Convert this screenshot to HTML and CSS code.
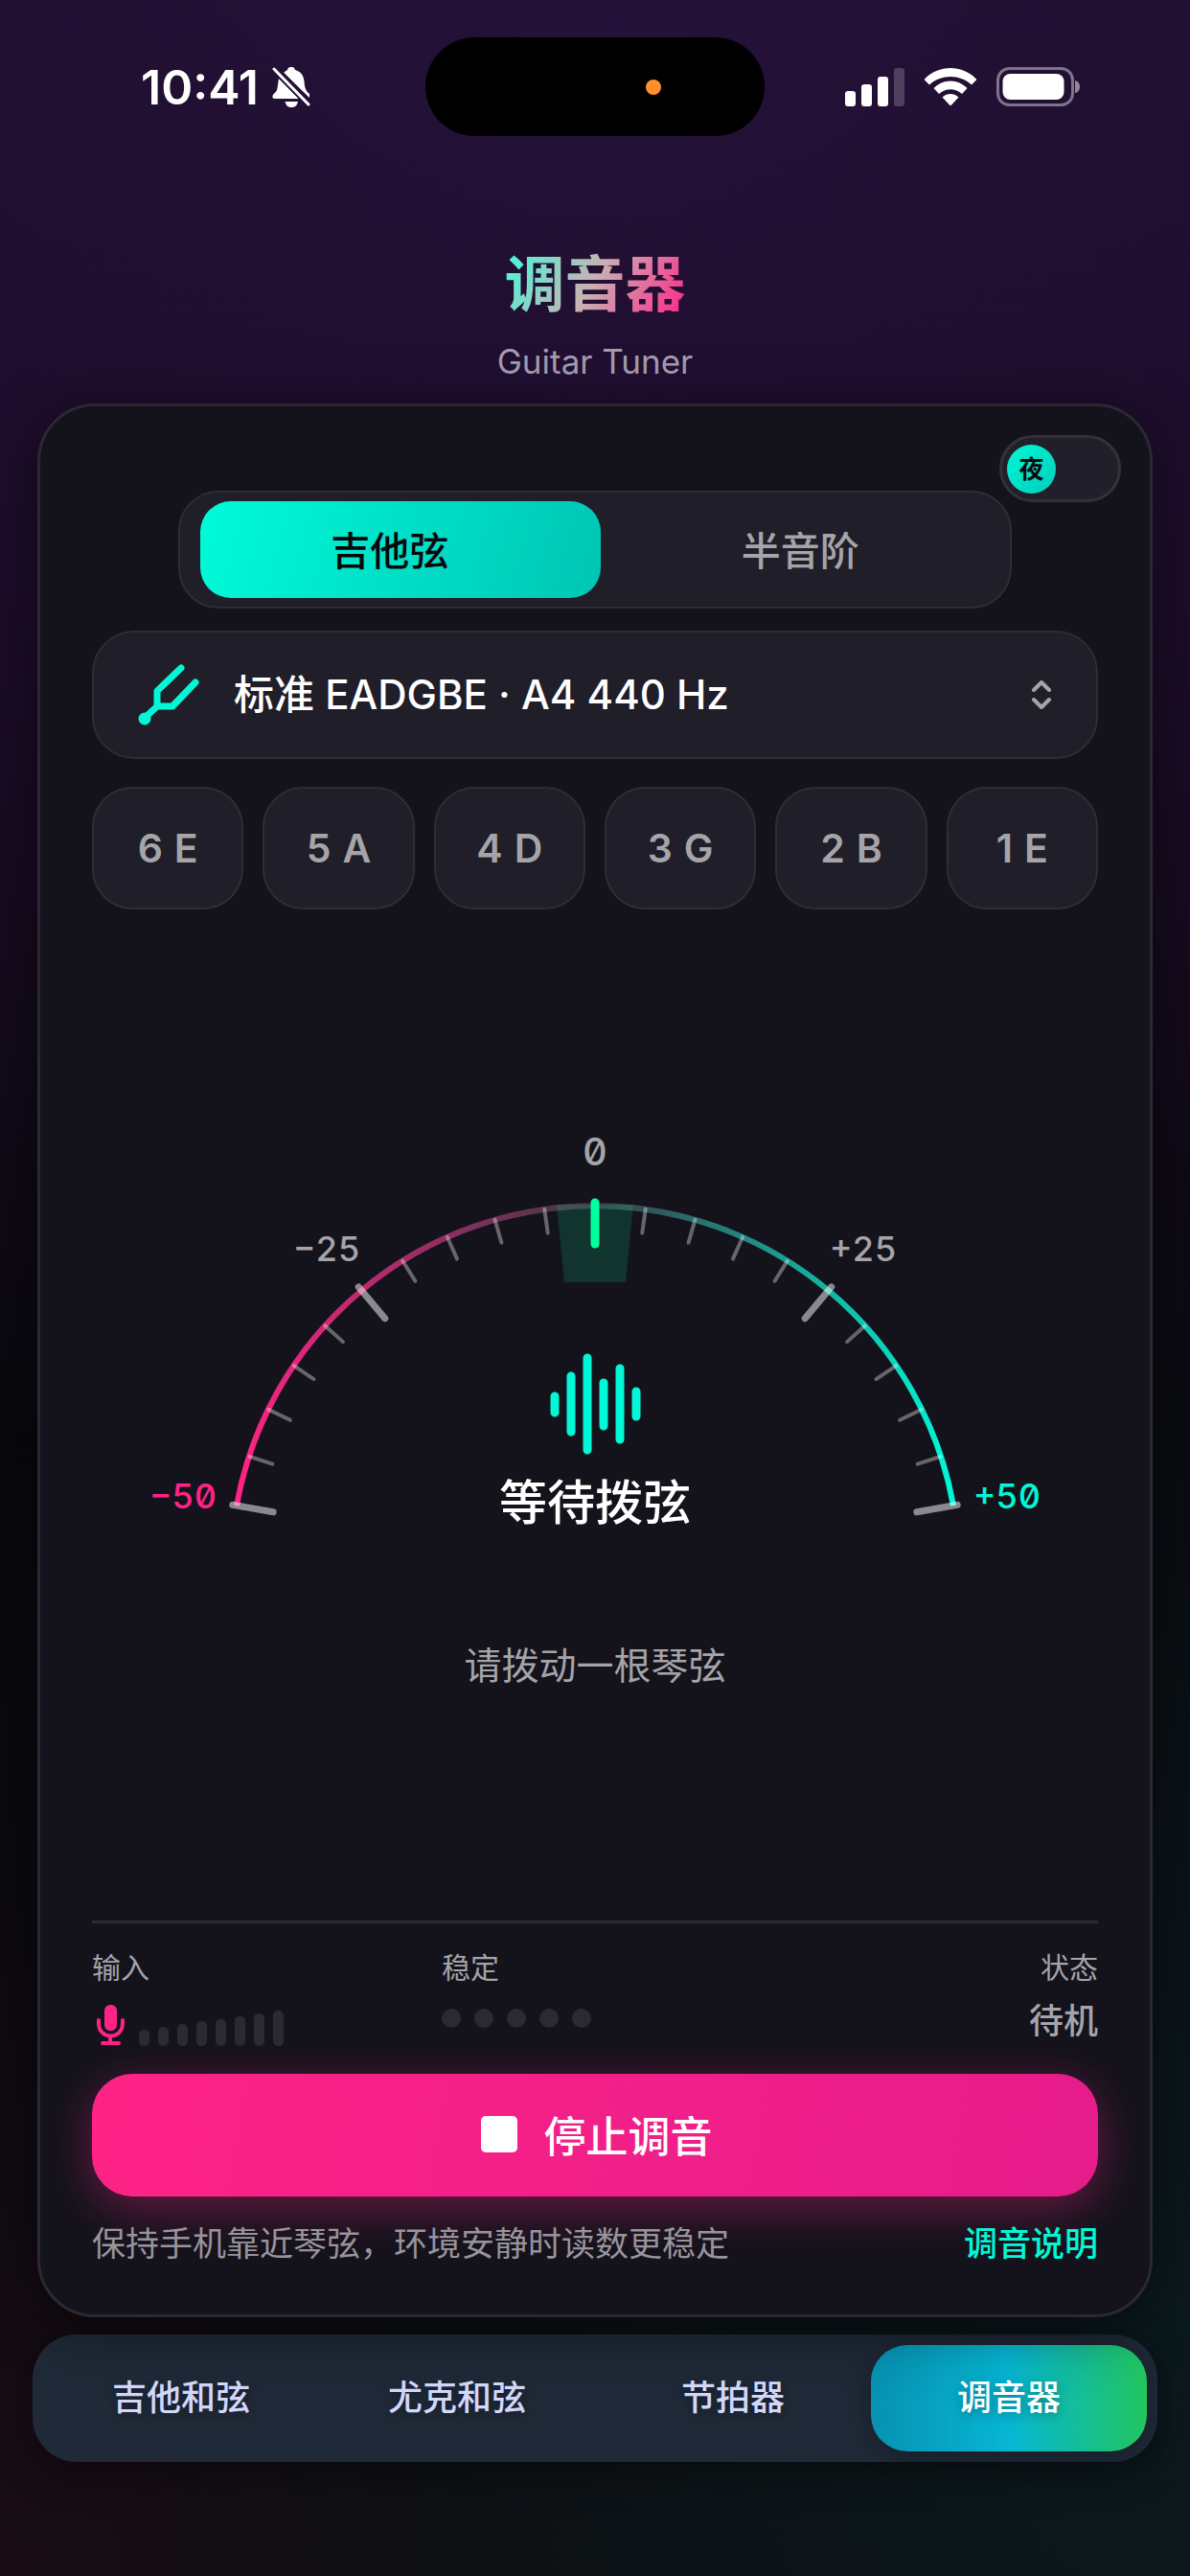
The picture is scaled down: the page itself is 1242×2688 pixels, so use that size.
FILE: index.html
```
<!DOCTYPE html>
<html lang="zh-CN">
<head>
  <meta charset="UTF-8">
  <meta name="viewport" content="width=device-width, initial-scale=1">
  <title>调音器</title>
  <link rel="stylesheet" href="styles.css">
</head>
<body>

<div class="status-bar">
  <div class="status-left">
    <span class="clock">10:41</span>
    <svg class="bell" viewBox="0 0 40 44" width="40" height="44">
      <path fill="#fff" d="M12 7 C14 5 15 4.500 16 4 C16.500 1.500 18 1 20 1 C22 1 23.500 1.500 24 4 C30 5.500 33 10 33.500 16 C34 23 35 25.500 39 29 V33 Z"/>
      <path fill="#fff" d="M7 13 L28 34 H3 C1 34 0 33 0.500 31 C1 29 4 27.500 5 25 C6 22 6 17 7 13 Z"/>
      <path fill="#fff" d="M13.500 37 H27 C26 41.500 23.500 43 20 43 C17 43 14.500 41.500 13.500 37 Z"/>
      <path stroke="#231034" stroke-width="8" d="M4 4 L40 41" fill="none"/>
      <path stroke="#fff" stroke-width="3" stroke-linecap="round" d="M2 3 L38 40" fill="none"/>
    </svg>
  </div>
  <div class="island"><span class="mic-dot"></span></div>
  <div class="status-right">
    <svg viewBox="0 0 62 40" width="62" height="40" fill="#fff">
      <rect x="0" y="24" width="11" height="16" rx="3"/>
      <rect x="17" y="17" width="11" height="23" rx="3"/>
      <rect x="34" y="9" width="11" height="31" rx="3"/>
      <rect x="51" y="0" width="11" height="40" rx="3" opacity="0.2"/>
    </svg>
    <svg viewBox="0 0 54 40" width="54" height="40" fill="#fff">
      <path d="M27 0 C17 0 7 4 0 11.500 Q-0.500 12 0 12.500 L5 17.500 C17 6 37 6 49 17.500 L54 12.500 Q54.500 12 54 11.500 C47 4 37 0 27 0 Z"/>
      <path d="M27 13.500 C20 13.500 14 16.500 9.500 21 L15 27 C21.500 20.500 32.500 20.500 39 27 L44.500 21 C40 16.500 34 13.500 27 13.500 Z"/>
      <path d="M27 27 C24 27 21 28 18.500 30.500 L26 38.500 Q27 39.500 28 38.500 L35.500 30.500 C33 28 30 27 27 27 Z"/>
    </svg>
    <svg viewBox="0 0 88 42" width="88" height="42">
      <rect x="1.500" y="1.500" width="78" height="38" rx="12" fill="none" stroke="#fff" stroke-opacity="0.420" stroke-width="3"/>
      <rect x="6.500" y="7" width="64" height="27" rx="8" fill="#fff"/>
      <path d="M82 14 C85 14.500 87 17 87 20.500 C87 24 85 26.500 82 27 Z" fill="#fff" fill-opacity="0.500"/>
    </svg>
  </div>
</div>

<header class="page-head">
  <h1>调音器</h1>
  <p>Guitar Tuner</p>
</header>

<main class="card">
  <button class="theme-toggle" type="button" aria-label="夜间模式"><span class="knob">夜</span></button>

  <div class="segment">
    <button type="button" class="active">吉他弦</button>
    <button type="button">半音阶</button>
  </div>

  <label class="tuning">
    <svg viewBox="0 0 64 64" width="64" height="64" fill="none" stroke="#00f8d7" stroke-width="7" stroke-linecap="round" stroke-linejoin="round">
      <path d="M45 4 L20 28 V44 H36 L60 19"/>
      <path d="M20 44 L7 56"/>
      <circle cx="7" cy="57" r="6" fill="#00f8d7" stroke="none"/>
      <circle cx="7" cy="57" r="3"/>
    </svg>
    <select aria-label="调弦">
      <option>标准 EADGBE · A4 440 Hz</option>
    </select>
    <svg class="updown" viewBox="0 0 22 30" width="22" height="30" fill="none" stroke="#a5a4a9" stroke-width="4" stroke-linecap="round" stroke-linejoin="round">
      <path d="M3 10 L11 2 L19 10"/>
      <path d="M3 20 L11 28 L19 20"/>
    </svg>
  </label>

  <div class="strings">
    <button type="button"><span>6</span><span>E</span></button>
    <button type="button"><span>5</span><span>A</span></button>
    <button type="button"><span>4</span><span>D</span></button>
    <button type="button"><span>3</span><span>G</span></button>
    <button type="button"><span>2</span><span>B</span></button>
    <button type="button"><span>1</span><span>E</span></button>
  </div>

  <section class="meter">
    <div class="gauge">
      <svg class="dial" viewBox="0 -20 1050 444">
        <defs>
          <linearGradient id="arc" gradientUnits="userSpaceOnUse" x1="151" y1="0" x2="899" y2="0">
            <stop offset="0" stop-color="#ff2386"/>
            <stop offset="0.500" stop-color="#3b3843"/>
            <stop offset="1" stop-color="#00f8d7"/>
          </linearGradient>
        </defs>
        <path d="M151 385 A380 380 0 0 1 899 385" fill="none" stroke="url(#arc)" stroke-width="6"/>
        <path d="M485 71 H565 L557 152 H493 Z" fill="#00ff9d" fill-opacity="0.140"/>
        <g id="ticks"></g>
        <path d="M525 69 V112" class="zero-mark"/>
        <g class="scale">
          <text x="525" y="30" class="zero">0</text>
          <text x="245" y="130">−25</text>
          <text x="805" y="130">+25</text>
          <text x="95" y="388" class="flat">−50</text>
          <text x="955" y="388" class="sharp">+50</text>
        </g>
      </svg>
      <div class="readout">
        <svg viewBox="0 0 96 106" width="96" height="106" stroke="#00f8d7" stroke-width="9" stroke-linecap="round">
          <path d="M6 45 V62 M23 24 V82 M40 5 V101 M57 31 V76 M74 16 V90 M91 40 V66"/>
        </svg>
        <strong>等待拨弦</strong>
      </div>
    </div>
    <p class="hint">请拨动一根琴弦</p>
  </section>

  <div class="stats">
    <div class="stat">
      <span>输入</span>
      <div class="input-level">
        <svg viewBox="0 0 38 44" width="38" height="44" fill="none" stroke="#ff2386" stroke-width="4" stroke-linecap="round">
          <rect x="13" y="1" width="13" height="27" rx="6" fill="#ff2386" stroke="none"/>
          <path d="M7 17 V20 C7 38 32 38 32 20 V17 M19 34 V40 M11 41 H28"/>
        </svg>
        <div class="bars" id="bars"></div>
      </div>
    </div>
    <div class="stat">
      <span>稳定</span>
      <div class="dots"><i></i><i></i><i></i><i></i><i></i></div>
    </div>
    <div class="stat end">
      <span>状态</span>
      <b>待机</b>
    </div>
  </div>

  <button class="stop" type="button"><i></i>停止调音</button>

  <div class="foot">
    <p>保持手机靠近琴弦，环境安静时读数更稳定</p>
    <a href="#help">调音说明</a>
  </div>
</main>

<nav class="tabs">
  <a href="#guitar">吉他和弦</a>
  <a href="#ukulele">尤克和弦</a>
  <a href="#metronome">节拍器</a>
  <a href="#tuner" class="active">调音器</a>
</nav>

<script>
// one tick every 5 cents, 8 degrees apart
const ticks = document.getElementById('ticks');
for (let cents = -50; cents <= 50; cents += 5) {
  if (cents === 0) continue;
  const major = cents % 25 === 0;
  const a = cents * 1.6 * Math.PI / 180;
  const r1 = major ? 384 : 379;
  const r2 = major ? 341 : 354;
  const line = document.createElementNS('http://www.w3.org/2000/svg', 'line');
  line.setAttribute('x1', 525 + r1 * Math.sin(a));
  line.setAttribute('y1', 451 - r1 * Math.cos(a));
  line.setAttribute('x2', 525 + r2 * Math.sin(a));
  line.setAttribute('y2', 451 - r2 * Math.cos(a));
  line.setAttribute('class', major ? 'tick major' : 'tick');
  ticks.appendChild(line);
}

const bars = document.getElementById('bars');
[17, 20, 23, 26, 28, 31, 34, 37].forEach(h => {
  const bar = document.createElement('i');
  bar.style.height = h + 'px';
  bars.appendChild(bar);
});
</script>

</body>
</html>
```

FILE: styles.css
```
* {
  box-sizing: border-box;
}
html {
  background: #08070c;
}
body {
  margin: 0;
  min-height: 100vh;
  display: flex;
  flex-direction: column;
  color: #fff;
  font-family: Inter, "Noto Sans CJK SC", sans-serif;
  background:
    radial-gradient(circle at 50% 0%, rgba(124, 58, 237, 0.06), transparent 1000px),
    radial-gradient(ellipse 40% 30% at 0% 100%, rgba(255, 35, 134, 0.05), transparent),
    radial-gradient(ellipse 90% 45% at 100% 90%, rgba(0, 200, 200, 0.08), transparent),
    linear-gradient(#1f0f2e 0, #1c0c28 700px, #09080d 1500px, #0d0c10 100%);
}
h1, p {
  margin: 0;
}
button, select {
  font-family: inherit;
  color: inherit;
  border: none;
  cursor: pointer;
}
svg {
  flex: none;
}

/* status bar */
.status-bar {
  display: grid;
  grid-template-columns: 1fr 354px 1fr;
  align-items: center;
  padding-top: 39px;
}
.status-left {
  display: flex;
  align-items: center;
  justify-content: flex-end;
  gap: 14px;
  padding-right: 120px;
}
.clock {
  font-size: 50px;
  font-weight: 600;
  line-height: 60px;
}
.island {
  height: 103px;
  border-radius: 52px;
  background: #000;
  display: flex;
  align-items: center;
  justify-content: flex-end;
  padding-right: 108px;
}
.mic-dot {
  width: 16px;
  height: 16px;
  border-radius: 50%;
  background: #ff8f2c;
}
.status-right {
  display: flex;
  align-items: center;
  gap: 21px;
  padding-left: 84px;
}

/* title */
.page-head {
  margin-top: 116px;
  text-align: center;
}
.page-head h1 {
  width: fit-content;
  margin: 0 auto;
  font-size: 63px;
  line-height: 76px;
  font-weight: 700;
  background: linear-gradient(120deg, #3cffdc 0%, #c9b1b3 48%, #ff2386 100%);
  -webkit-background-clip: text;
  background-clip: text;
  color: transparent;
}
.page-head p {
  margin-top: 21px;
  font-size: 35px;
  line-height: 44px;
  color: #a49dae;
}

/* card */
.card {
  position: relative;
  flex: 1;
  display: flex;
  flex-direction: column;
  margin: 22px 39px 0;
  padding: 88px 54px 50px;
  background: #14131c;
  border: 3px solid #2a2933;
  border-radius: 60px;
  box-shadow: 0 10px 60px rgba(0, 0, 0, 0.5);
}
.theme-toggle {
  position: absolute;
  top: 30px;
  right: 30px;
  width: 127px;
  height: 70px;
  padding: 0 5px;
  display: flex;
  align-items: center;
  border: 3px solid #33323b;
  border-radius: 35px;
  background: #211f29;
}
.knob {
  width: 51px;
  height: 51px;
  border-radius: 50%;
  background: linear-gradient(135deg, #00f8d7, #00cdb9);
  color: #08080c;
  font-size: 26px;
  line-height: 51px;
  font-weight: 700;
  text-align: center;
}

.segment {
  display: grid;
  grid-template-columns: 1fr 1fr;
  height: 123px;
  margin: 0 90px;
  padding: 9px 10px 9px 21px;
  border: 2px solid #2e2d36;
  border-radius: 42px;
  background: #201e28;
}
.segment button {
  padding: 0 0 4px;
  font-size: 41px;
  font-weight: 500;
  border-radius: 32px;
  background: none;
  color: #a5a4a9;
}
.segment .active {
  padding-right: 22px;
  background: linear-gradient(105deg, #00fbd9, #00c5b4);
  color: #08080c;
}

.tuning {
  display: flex;
  align-items: center;
  height: 134px;
  margin-top: 23px;
  padding: 0 46px;
  border: 2px solid #2e2d36;
  border-radius: 44px;
  background: #201e28;
}
.tuning select {
  flex: 1;
  appearance: none;
  margin-left: 36px;
  padding: 0;
  background: none;
  font-size: 42px;
  font-weight: 500;
  line-height: 60px;
}

.strings {
  display: grid;
  grid-template-columns: repeat(6, 1fr);
  gap: 20px;
  margin-top: 29px;
}
.strings button {
  display: flex;
  align-items: center;
  justify-content: center;
  gap: 12px;
  height: 128px;
  padding: 0;
  border: 2px solid #2e2d36;
  border-radius: 42px;
  background: #201e28;
  color: #a5a4a9;
  font-size: 41px;
  font-weight: 600;
}

/* gauge */
.meter {
  flex: 1;
  display: flex;
  flex-direction: column;
  justify-content: center;
}
.gauge {
  display: grid;
}
.dial, .readout {
  grid-area: 1 / 1;
}
.dial {
  width: 100%;
}
.tick {
  stroke: #fff;
  stroke-opacity: 0.35;
  stroke-width: 4;
  stroke-linecap: round;
}
.tick.major {
  stroke-opacity: 0.5;
  stroke-width: 7;
}
.zero-mark {
  stroke: #00ff9d;
  stroke-width: 9;
  stroke-linecap: round;
}
.scale text {
  fill: #a5a4a9;
  font-size: 36px;
  font-weight: 500;
  text-anchor: middle;
  font-feature-settings: "tnum", "zero";
}
.scale .zero {
  font-size: 40px;
}
.scale .flat {
  fill: #ff2386;
}
.scale .sharp {
  fill: #00f8d7;
}
.readout {
  align-self: end;
  display: flex;
  flex-direction: column;
  align-items: center;
  gap: 20px;
  padding-bottom: 12px;
}
.readout strong {
  font-size: 50px;
  line-height: 60px;
  font-weight: 500;
}
.hint {
  margin: 100px 0 22px;
  font-size: 39px;
  line-height: 56px;
  text-align: center;
  color: #a5a4a9;
}

/* input / stability / state */
.stats {
  display: grid;
  grid-template-columns: repeat(3, 1fr);
  column-gap: 45px;
  padding-top: 28px;
  border-top: 3px solid #2b2a34;
}
.stat {
  display: flex;
  flex-direction: column;
  gap: 20px;
  height: 101px;
  font-size: 30px;
  line-height: 36px;
  color: #a5a4a9;
}
.stat.end {
  align-items: flex-end;
}
.stat b {
  font-size: 36px;
  font-weight: 500;
}
.input-level {
  display: flex;
  align-items: flex-end;
  gap: 11px;
}
.bars {
  display: flex;
  align-items: flex-end;
  gap: 9px;
}
.bars i {
  width: 11px;
  border-radius: 5px;
  background: #2b2a34;
}
.dots {
  display: flex;
  gap: 14px;
  padding-top: 5px;
}
.dots i {
  width: 20px;
  height: 20px;
  border-radius: 50%;
  background: #2b2a34;
}

.stop {
  display: flex;
  align-items: center;
  justify-content: center;
  gap: 28px;
  height: 128px;
  margin-top: 28px;
  padding: 0 0 3px 3px;
  border-radius: 42px;
  background: linear-gradient(100deg, #ff2386, #e61c8b);
  box-shadow: 0 12px 48px rgba(255, 35, 134, 0.36);
  font-size: 44px;
  font-weight: 500;
}
.stop i {
  width: 38px;
  height: 38px;
  border-radius: 5px;
  background: #fff;
}
.foot {
  display: flex;
  justify-content: space-between;
  margin-top: 25px;
  font-size: 35px;
  line-height: 48px;
  color: #98949c;
}
.foot a {
  color: #00f8d7;
  font-weight: 500;
  text-decoration: none;
}

/* bottom tabs */
.tabs {
  display: flex;
  margin: 18px 34px 119px;
  padding: 11px;
  border-radius: 46px;
  background: #1f2937;
  box-shadow: 0 10px 40px rgba(0, 0, 0, 0.4);
}
.tabs a {
  flex: 1;
  font-size: 36px;
  line-height: 111px;
  font-weight: 500;
  text-align: center;
  text-decoration: none;
  color: #d3d8fb;
  border-radius: 38px;
  text-shadow: 0 3px 12px rgba(0, 0, 0, 0.3);
}
.tabs .active {
  color: #fff;
  background: linear-gradient(90deg, #0891b2, #06b6d4 50%, #22c55e);
  box-shadow: 0 6px 24px rgba(0, 0, 0, 0.3);
}
```
